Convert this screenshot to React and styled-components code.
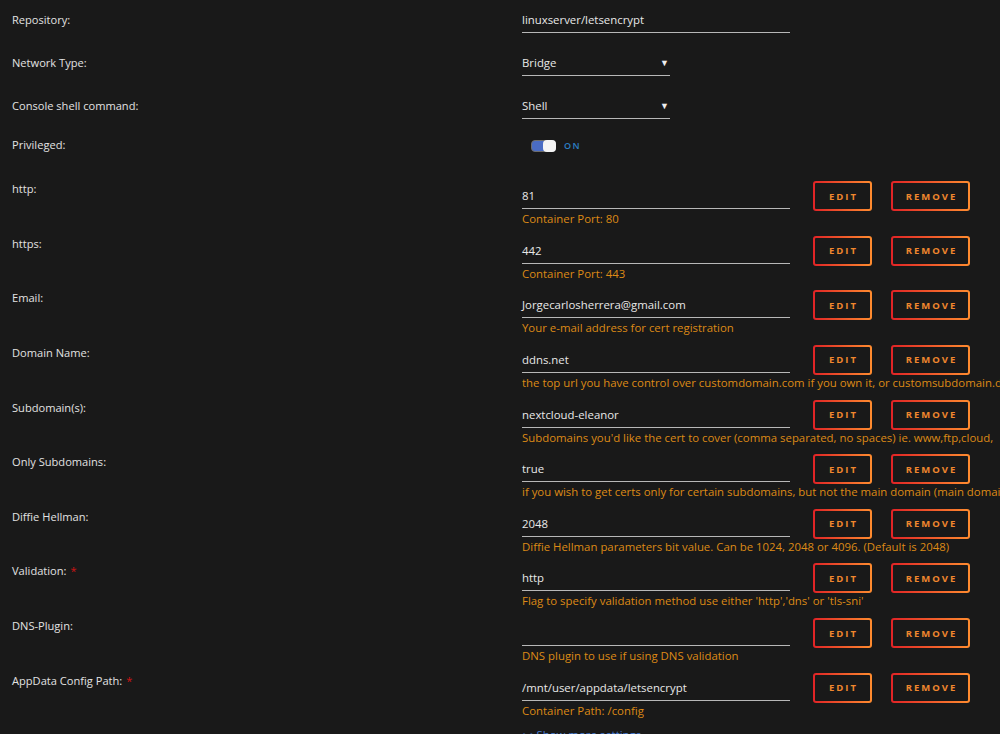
import React from 'react'
import styled, { createGlobalStyle } from 'styled-components'

const GlobalStyle = createGlobalStyle`
  html, body {
    margin: 0;
    padding: 0;
    background: #191919;
  }
  body {
    font-family: 'Open Sans', 'Noto Sans', sans-serif;
    color: #e2e2e2;
    font-size: 11.4px;
    overflow: hidden;
  }
`

const Page = styled.div`
  width: 1000px;
  height: 734px;
  overflow: hidden;
  background: #191919;
`

const Row = styled.div`
  display: grid;
  grid-template-columns: 522px 1fr;
  height: ${p => p.h}px;
  margin-top: ${p => p.top || 0}px;
`

const Label = styled.div`
  padding-left: 12px;
  padding-top: ${p => p.pad}px;
  line-height: 16px;
  font-size: 11.1px;
  color: #e2e2e2;
  white-space: nowrap;
`

const Required = styled.span`
  color: #d01414;
  margin-left: 4px;
`

const Content = styled.div`
  display: flex;
  align-items: flex-start;
  min-width: 0;
`

const Field = styled.div`
  width: ${p => p.w || 268}px;
  flex: none;
`

const Input = styled.div`
  position: relative;
  height: 20px;
  padding-top: 7px;
  line-height: 16px;
  border-bottom: 1px solid #b8b8b8;
  color: #e8e8e8;
  white-space: nowrap;
`

const Arrow = styled.span`
  position: absolute;
  right: 1px;
  top: 7px;
  font-size: 9px;
  color: #eee;
`

const Help = styled.div`
  margin-top: 2px;
  line-height: 16px;
  color: #dd8a16;
  white-space: nowrap;
`

const Buttons = styled.div`
  display: flex;
  gap: 19px;
  margin-left: 23px;
  flex: none;
`

const Button = styled.button`
  width: ${p => p.w}px;
  height: 30px;
  box-sizing: border-box;
  border: 2px solid transparent;
  border-radius: 3px;
  background:
    linear-gradient(#191919, #191919) padding-box,
    linear-gradient(90deg, #e02326, #ff8c2f) border-box;
  color: #f0872e;
  font-family: 'Open Sans', sans-serif;
  font-weight: 700;
  font-size: 9.5px;
  letter-spacing: 2px;
  padding: 0 0 0 2px;
  cursor: pointer;
`

const ToggleWrap = styled.div`
  display: flex;
  align-items: center;
  gap: 8px;
  padding-left: 9px;
  padding-top: 5px;
`

const Toggle = styled.div`
  width: 25px;
  height: 12px;
  border-radius: 4px;
  background: #4a6cc4;
  position: relative;
  border: 1px solid #6d6d6d;
  box-sizing: border-box;
`

const Knob = styled.div`
  position: absolute;
  right: -1px;
  top: -1px;
  width: 13px;
  height: 12px;
  border-radius: 4px;
  background: #f4f4f4;
`

const OnText = styled.span`
  color: #2c7fc4;
  font-size: 9px;
  font-weight: 600;
  letter-spacing: 1.4px;
`

const MoreLink = styled.div`
  padding-left: 522px;
  color: #4a7fd4;
  line-height: 16px;
`

const configs = [
  { label: 'http:', value: '81', help: 'Container Port: 80' },
  { label: 'https:', value: '442', help: 'Container Port: 443' },
  { label: 'Email:', value: 'Jorgecarlosherrera@gmail.com', help: 'Your e-mail address for cert registration' },
  { label: 'Domain Name:', value: 'ddns.net', help: 'the top url you have control over customdomain.com if you own it, or customsubdomain.ddnsprovider.com' },
  { label: 'Subdomain(s):', value: 'nextcloud-eleanor', help: "Subdomains you'd like the cert to cover (comma separated, no spaces) ie. www,ftp,cloud," },
  { label: 'Only Subdomains:', value: 'true', help: 'if you wish to get certs only for certain subdomains, but not the main domain (main domain may be hosted on another machine)' },
  { label: 'Diffie Hellman:', value: '2048', help: 'Diffie Hellman parameters bit value. Can be 1024, 2048 or 4096. (Default is 2048)' },
  { label: 'Validation:', required: true, value: 'http', help: "Flag to specify validation method use either 'http','dns' or 'tls-sni'" },
  { label: 'DNS-Plugin:', value: '', help: 'DNS plugin to use if using DNS validation' },
  { label: 'AppData Config Path:', required: true, value: '/mnt/user/appdata/letsencrypt', help: 'Container Path: /config' },
]

const ConfigRow = ({ label, required, value, help }) => (
  <Row h={54.65}>
    <Label pad={0}>
      {label}
      {required && <Required>*</Required>}
    </Label>
    <Content>
      <Field>
        <Input>{value}</Input>
        <Help>{help}</Help>
      </Field>
      <Buttons>
        <Button w={59}>EDIT</Button>
        <Button w={79}>REMOVE</Button>
      </Buttons>
    </Content>
  </Row>
)

export default function App() {
  return (
    <Page>
      <GlobalStyle />
      <Row h={43} top={5}>
        <Label pad={7}>Repository:</Label>
        <Content>
          <Field>
            <Input>linuxserver/letsencrypt</Input>
          </Field>
        </Content>
      </Row>
      <Row h={43}>
        <Label pad={7}>Network Type:</Label>
        <Content>
          <Field w={148}>
            <Input>
              Bridge
              <Arrow>▼</Arrow>
            </Input>
          </Field>
        </Content>
      </Row>
      <Row h={43}>
        <Label pad={7}>Console shell command:</Label>
        <Content>
          <Field w={148}>
            <Input>
              Shell
              <Arrow>▼</Arrow>
            </Input>
          </Field>
        </Content>
      </Row>
      <Row h={47}>
        <Label pad={3}>Privileged:</Label>
        <Content>
          <ToggleWrap>
            <Toggle>
              <Knob />
            </Toggle>
            <OnText>ON</OnText>
          </ToggleWrap>
        </Content>
      </Row>
      {configs.map(c => (
        <ConfigRow key={c.label} {...c} />
      ))}
      <MoreLink>• • Show more settings ...</MoreLink>
    </Page>
  )
}
